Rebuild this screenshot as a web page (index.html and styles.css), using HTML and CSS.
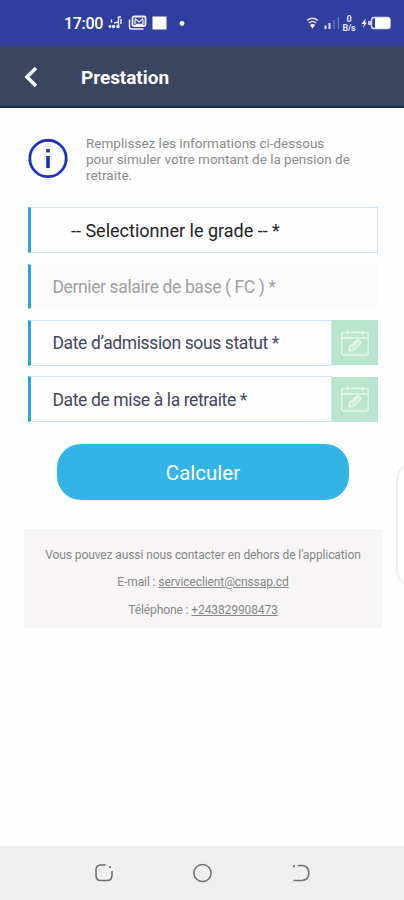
FILE: index.html
```html
<!DOCTYPE html>
<html lang="fr">
<head>
<meta charset="utf-8">
<title>Prestation</title>
<link rel="stylesheet" href="styles.css">
</head>
<body>
<div class="screen">
  <div class="status">
    <span class="time">17:00</span>
    <svg class="status-left" width="82" height="18" viewBox="0 0 82 18" fill="none" stroke="#f0f0fb">
      <path d="M4.500 5.500v3M7 9l4.500-1v-5h2.500M11.500 3.500v9M14 5v5" stroke-width="1.400"/>
      <circle cx="3" cy="12.500" r="1.400" fill="#f0f0fb" stroke="none"/><circle cx="6.500" cy="12.500" r="1.700" fill="#f0f0fb" stroke="none"/><circle cx="11" cy="12.500" r="1.700" fill="#f0f0fb" stroke="none"/>
      <path d="M22.500 5.500v7q0 2.500 2 2.500h12" stroke-width="1.500"/>
      <rect x="25.500" y="2.500" width="13" height="9.500" rx="1.500" stroke-width="1.800"/>
      <path d="M28 4.500l4 3.500 4-3.500M28 10.500v-5M36 10.500v-5M29 10.500h7" stroke-width="1.300"/>
      <rect x="45.500" y="2.500" width="14" height="13" fill="#fff" stroke="none"/>
      <circle cx="75" cy="9.500" r="2.400" fill="#fff" stroke="none"/>
    </svg>
    <svg class="wifi" width="36" height="16" viewBox="0 0 36 16" fill="none" stroke="#e2e3f6">
      <path d="M1 5.500q5.500-4.500 11 0M2.800 8q3.700-3 7.400 0" stroke-width="1.600"/><path d="M4 10q2.500-2 5 0l-2.500 3.500z" fill="#fff" stroke="none"/>
      <path d="M19.500 10.500v3.500M23.500 8v6" stroke-width="2"/><path d="M28 5v9M32.500 2v12" stroke="#6975c4" stroke-width="1.300"/>
    </svg>
    <span class="rate"><span>0</span><span>B/s</span></span>
    <svg class="battery" width="32" height="14" viewBox="0 0 32 14">
      <path d="M4.500 2.500L.5 8h2.500L2 12 6 6.500H4z" fill="#fff"/>
      <path d="M7 5h3v4H7z" fill="#c3c8ef"/><rect x="10.500" y="1.500" width="18.500" height="11" rx="2.500" fill="none" stroke="#dfe1f7" stroke-width="1.400"/><rect x="14" y="2" width="15" height="10" rx="1" fill="#fff"/>
    </svg>
  </div>
  <header class="bar">
    <svg class="back" width="16" height="22" viewBox="0 0 16 22" fill="none" stroke="#fff" stroke-width="3.600"><path d="M13 2L4 11 13 20"/></svg>
    <h1>Prestation</h1>
  </header>
  <main>
    <div class="intro">
      <svg width="40" height="40" viewBox="0 0 40 40" fill="none" stroke="#1b32bd"><circle cx="20" cy="19.500" r="18.200" stroke-width="2.800"/><path d="M20 10v3.500M20 17v12" stroke-width="3.600"/></svg>
      <p>Remplissez les informations ci-dessous<br>pour simuler votre montant de la pension de<br>retraite.</p>
    </div>
    <form>
      <div class="field select"><span>-- Selectionner le grade -- *</span></div>
      <div class="field salary"><span>Dernier salaire de base ( FC ) *</span></div>
      <div class="row">
        <div class="field">Date d’admission sous statut *</div>
        <div class="cal"><svg width="28" height="28" viewBox="0 0 28 28" fill="none" stroke="#e5f8ed" stroke-width="1.300"><rect x=".8" y="3.500" width="26.400" height="22.500" rx="2"/><path d="M1 9h26M6.500 1v5M21.500 1v5M5 3.500h3M20 3.500h3"/><path d="M8 22l1-4.500L17 10.500l3 3-7.500 7.500zM11 19l6-6" stroke-width="1.700"/></svg></div>
      </div>
      <div class="row">
        <div class="field">Date de mise à la retraite *</div>
        <div class="cal"><svg width="28" height="28" viewBox="0 0 28 28" fill="none" stroke="#e5f8ed" stroke-width="1.300"><rect x=".8" y="3.500" width="26.400" height="22.500" rx="2"/><path d="M1 9h26M6.500 1v5M21.500 1v5M5 3.500h3M20 3.500h3"/><path d="M8 22l1-4.500L17 10.500l3 3-7.500 7.500zM11 19l6-6" stroke-width="1.700"/></svg></div>
      </div>
      <button type="button">Calculer</button>
    </form>
    <section class="contact">
      <p>Vous pouvez aussi nous contacter en dehors de l'application</p>
      <p>E-mail : <u>serviceclient@cnssap.cd</u></p>
      <p>Téléphone : <u>+243829908473</u></p>
    </section>
  </main>
  <div class="handle"></div>
  <nav>
    <svg width="20" height="20" viewBox="0 0 20 20" fill="none" stroke="#707070" stroke-width="1.600"><path d="M11.500 2H7Q2 2 2 7v5q0 5.500 4.500 5.500h7Q17.800 17.500 18 12V8"/><circle cx="16" cy="4" r="1.100" fill="#707070" stroke="none"/></svg>
    <svg width="20" height="20" viewBox="0 0 20 20" fill="none" stroke="#707070" stroke-width="1.500"><circle cx="9.500" cy="10" r="8.600"/></svg>
    <svg width="20" height="20" viewBox="0 0 20 20" fill="none" stroke="#707070" stroke-width="1.600"><path d="M7 2.500h4Q17.800 3 17.800 10T11 17.500H2.500"/><path d="M3 2v2.500"/></svg>
  </nav>
</div>
</body>
</html>
```
FILE: styles.css
```css
* { box-sizing: border-box; margin: 0; padding: 0; }
body { font-family: Roboto, "Liberation Sans", sans-serif; background: #fefefe; }
.screen { position: relative; width: 404px; height: 900px; display: flex; flex-direction: column; overflow: hidden; }
.status { height: 46px; background: #303f9f; display: flex; align-items: center; padding: 0 12px 0 64px; color: #fff; flex: none; }
.time { font-size: 16px; font-weight: 500; width: 43px; letter-spacing: -.3px; padding-top: 1px; }
.wifi { margin-left: auto; }
.rate { display: flex; flex-direction: column; align-items: center; width: 14px; font-size: 9px; line-height: 9px; font-weight: 700; color: #e2e3f6; margin: 1px 5px 0 0; letter-spacing: -.3px; }
.battery { margin-right: -1px; }
.bar { height: 62px; background: #3a455f; border-bottom: 2px solid #1e2b49; display: flex; align-items: center; padding: 2px 0 0 23px; flex: none; }
.bar h1 { font-size: 19px; font-weight: 700; color: #fff; margin-left: 42px; padding-top: 1px; letter-spacing: -.05px; }
main { flex: 1; padding: 26px 22px 0 24px; }
.intro { display: flex; align-items: center; gap: 18px; padding-left: 4px; height: 49px; }
.intro p { font-size: 13.500px; line-height: 16px; color: #8a8a8a; white-space: nowrap; }
form { padding: 24px 4px 0; display: flex; flex-direction: column; gap: 11px; }
.field { height: 46px; border: 1px solid #cfe3f7; border-left: 3px solid #25a8d8; display: flex; align-items: center; font-size: 17.500px; letter-spacing: -.38px; padding: 1px 0 0 21.500px; color: #44465c; flex: 1 1 auto; white-space: nowrap; }
.select { font-size: 18px; letter-spacing: 0; padding: 1px 0 0 40px; color: #222; flex: none; }
.salary { background: #fbfbfb; border-color: #fbfbfb; border-left-color: #25a8d8; color: #a0a0a0; flex: none; height: 45px; }
.row { display: flex; height: 45px; align-items: center; }
.row + .row { margin-top: .5px; }
.cal { width: 46px; height: 45px; background: #b9e4ce; display: flex; align-items: center; justify-content: center; flex: none; }
button { width: 292px; height: 56px; border: 0; border-radius: 24px; background: #33b4e7; color: #fff; font: 400 20.500px Roboto, sans-serif; margin: 11px auto 0; padding-top: 2px; }
.contact { height: 99px; width: 358px; background: #f7f5f6; margin-top: 29px; padding-top: 12px; text-align: center; font-size: 12px; letter-spacing: -.1px; color: #858585; white-space: nowrap; }
.contact p { height: 27.500px; line-height: 28px; }
.handle { position: absolute; left: 396px; top: 464px; width: 30px; height: 122px; border: 2px solid #ededed; border-radius: 20px; background: #fff; }
nav { height: 54px; background: #efefef; flex: none; display: flex; justify-content: space-between; padding: 17px 93px 0 94px; }
```
